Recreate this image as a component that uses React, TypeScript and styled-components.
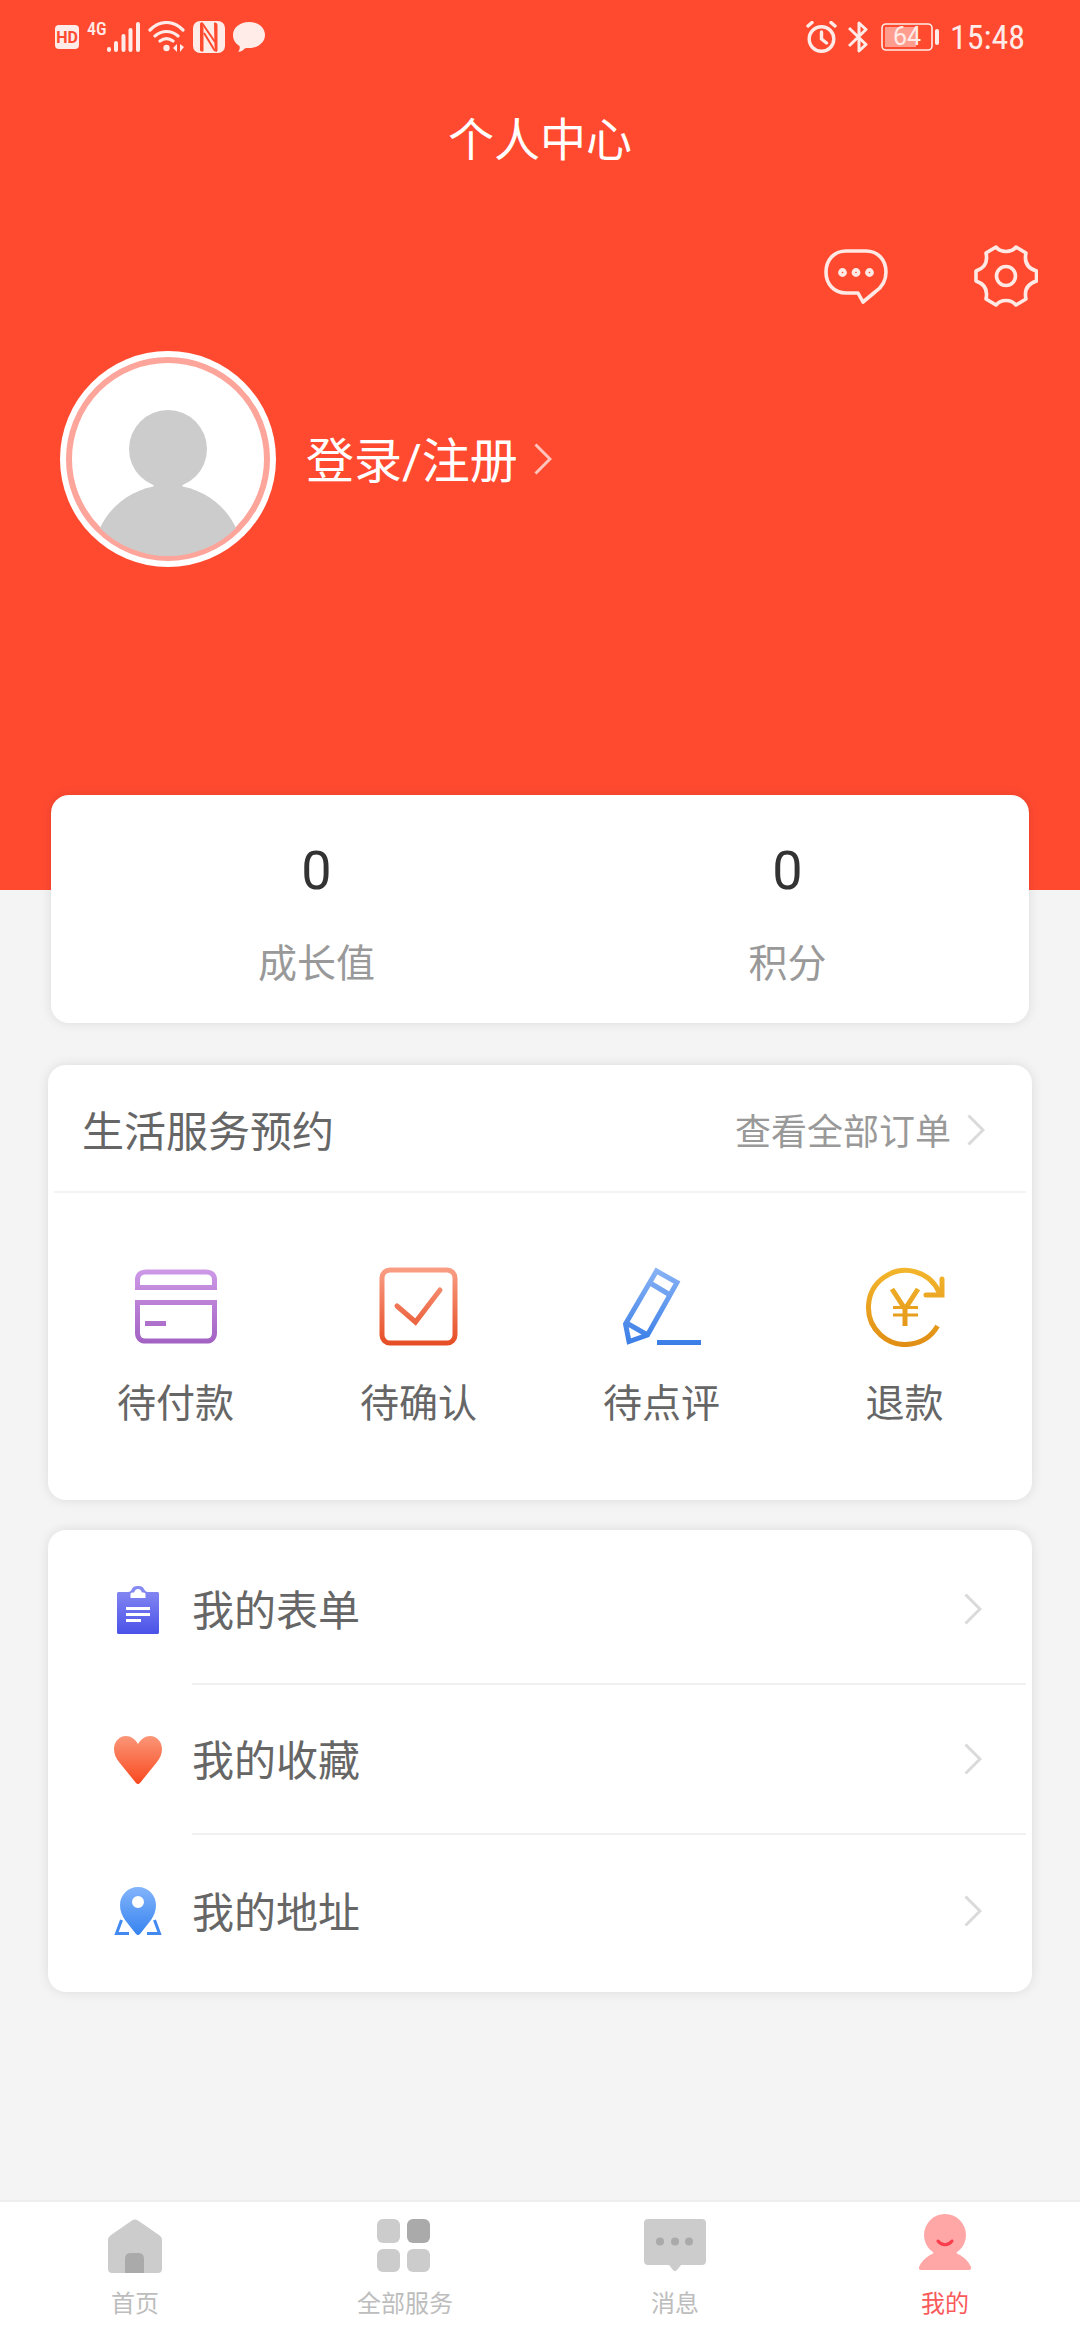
import React from "react";
import styled, { createGlobalStyle } from "styled-components";

const Global = createGlobalStyle`
  * { box-sizing: border-box; }
  body { margin: 0; background: #f4f4f4; }
  body, button {
    font-family: Roboto, "Noto Sans CJK SC", sans-serif;
  }
  button { border: 0; padding: 0; margin: 0; background: none; color: inherit; cursor: pointer; }
  svg { display: block; flex: none; }
  h1, h2, p { margin: 0; font-weight: 400; }
`;

const Page = styled.div`
  min-height: 100vh;
  display: flex;
  flex-direction: column;
  background: #f4f4f4;
`;

const Hero = styled.header`
  height: 890px;
  background: #ff4a30;
  color: #fff;
`;

const StatusBar = styled.div`
  height: 74px;
  padding: 0 55px;
  display: flex;
  align-items: center;
  justify-content: space-between;
  color: #ffebe8;
`;

const StatusGroup = styled.div<{ $gap: number }>`
  display: flex;
  align-items: center;
  gap: ${(p) => p.$gap}px;
`;

const Clock = styled.time`
  font-family: "Roboto Condensed", "Liberation Sans Narrow", Roboto, sans-serif;
  font-size: 34px;
  line-height: 40px;
`;

const Title = styled.h1`
  height: 132px;
  font-size: 46px;
  line-height: 132px;
  text-align: center;
`;

const Actions = styled.div`
  height: 140px;
  padding-right: 42px;
  display: flex;
  justify-content: flex-end;
  align-items: center;
  gap: 86px;
`;

const IconButton = styled.button`
  display: flex;
`;

const Profile = styled.button`
  margin-left: 60px;
  margin-top: 5px;
  display: flex;
  align-items: center;
  font-size: 48px;
  line-height: 64px;
`;

const LoginText = styled.span`
  margin: 0 16px 0 30px;
  padding-top: 6px;
`;

const Main = styled.main`
  flex: 1;
  margin-top: -95px;
  padding: 0 48px 30px;
  display: flex;
  flex-direction: column;
`;

const Card = styled.section`
  background: #fff;
  border-radius: 18px;
  box-shadow: 0 0 12px rgba(0, 0, 0, 0.1);
`;

const StatsCard = styled(Card)`
  height: 228px;
  margin: 0 3px 42px;
  padding: 0 6px 0 30px;
  display: grid;
  grid-template-columns: 1fr 1fr;
`;

const Stat = styled.div`
  padding-top: 44px;
  display: flex;
  flex-direction: column;
  align-items: center;
  gap: 34px;
`;

const StatValue = styled.strong`
  font-size: 54px;
  line-height: 64px;
  font-weight: 400;
  color: #333;
`;

const StatLabel = styled.span`
  font-size: 39px;
  line-height: 54px;
  color: #999;
`;

const OrdersCard = styled(Card)`
  height: 435px;
  margin-bottom: 30px;
  padding: 0 6px;
`;

const OrdersHead = styled.div`
  height: 128px;
  padding: 4px 41px 0 28px;
  display: flex;
  align-items: center;
  justify-content: space-between;
  border-bottom: 2px solid #f3f3f3;
`;

const OrdersTitle = styled.h2`
  padding-top: 6px;
  font-size: 42px;
  line-height: 60px;
  color: #666;
`;

const AllOrders = styled.button`
  display: flex;
  align-items: center;
  gap: 16px;
  font-size: 36px;
  line-height: 54px;
  color: #999;
`;

const AllOrdersText = styled.span`
  padding-top: 6px;
`;

const OrderGrid = styled.div`
  display: grid;
  grid-template-columns: repeat(4, 1fr);
`;

const OrderItem = styled.button`
  padding-top: 74px;
  display: flex;
  flex-direction: column;
  align-items: center;
  gap: 30px;
  font-size: 39px;
  line-height: 54px;
  color: #666;
`;

const MenuCard = styled(Card)`
  padding: 5px 6px;
`;

const MenuRow = styled.button`
  width: 100%;
  height: 150px;
  padding-left: 60px;
  display: flex;
  align-items: center;
  gap: 30px;
  &:last-child { height: 152px; }
`;

const MenuBody = styled.span`
  flex: 1;
  height: 100%;
  padding-right: 44px;
  display: flex;
  align-items: center;
  justify-content: space-between;
  border-bottom: 2px solid #f0f0f0;
  font-size: 42px;
  line-height: 60px;
  color: #666;
  ${MenuRow}:last-child & { border-bottom: 0; }
`;

const MenuText = styled.span`
  padding-top: 6px;
`;

const TabBar = styled.nav`
  height: 140px;
  border-top: 2px solid #eee;
  background: #fff;
  display: grid;
  grid-template-columns: repeat(4, 1fr);
`;

const Tab = styled.button<{ $active?: boolean }>`
  padding-top: 10px;
  display: flex;
  flex-direction: column;
  align-items: center;
  justify-content: flex-start;
  gap: 10px;
  font-size: 24px;
  line-height: 36px;
  color: ${(p) => (p.$active ? "#f95a5a" : "#bdbdbd")};
`;

const HdBadge = styled.span`
  width: 24px;
  height: 24px;
  border-radius: 4px;
  background: #ffebe8;
  color: #ff4a30;
  font-size: 16px;
  font-weight: 700;
  line-height: 25px;
  text-align: center;
`;

const Network = styled.span`
  display: flex;
  align-items: flex-start;
  height: 32px;
  font-family: "Roboto Condensed", "Liberation Sans Narrow", Roboto, sans-serif;
  font-size: 18px;
  font-weight: 500;
  line-height: 16px;
`;

const Chevron = ({ color }: { color: string }) => (
  <svg width="18" height="32" viewBox="0 0 18 32" fill="none" stroke={color} strokeWidth="3">
    <path d="M1.5 1.5 16 16 1.5 30.5" />
  </svg>
);

const Fade = ({ id, from, to, h }: { id: string; from: string; to: string; h: number }) => (
  <defs>
    <linearGradient id={id} gradientUnits="userSpaceOnUse" x1="0" y1="0" x2="0" y2={h}>
      <stop offset="0" stopColor={from} />
      <stop offset="1" stopColor={to} />
    </linearGradient>
  </defs>
);

const SignalIcon = () => (
  <svg width="33" height="32" viewBox="0 0 33 32" fill="none" stroke="currentColor" strokeWidth="4" strokeLinecap="round">
    <path d="M2 28v1M9 22v7M16.500 15v14M23.500 9v20M31 3v26" />
  </svg>
);

const WifiIcon = () => (
  <svg width="37" height="32" viewBox="0 0 37 32" fill="none" stroke="currentColor" strokeWidth="3.2" strokeLinecap="round">
    <path d="M2 9C12-1 25-1 35 9M7 15c7-6 16-6 23 0M12 20c4-3 9-3 13 0" />
    <circle cx="18.500" cy="27" r="3.200" fill="currentColor" stroke="none" />
    <path d="M29 23v8l-4-4zM32 23v8l4-5z" fill="currentColor" stroke="none" />
  </svg>
);

const NfcIcon = () => (
  <svg width="32" height="32" viewBox="0 0 32 32">
    <rect width="32" height="32" rx="7" fill="currentColor" />
    <g fill="#ff4a30">
      <path d="M7 3c0-1 1-2 2-2l1.500 6v23c0 1-3.500 1-3.500-1z" />
      <path d="M21 2c1-1 3.500 0 3.500 2v25c0 1.500-1 2-2 2l-1-6z" />
    </g>
    <path d="M9 2 22 21M11 12l11 18" stroke="#ff4a30" strokeWidth="2" />
  </svg>
);

const BubbleIcon = () => (
  <svg width="32" height="30" viewBox="0 0 32 30" fill="currentColor">
    <path d="M16 0c9 0 16 5.500 16 13s-7 13-16 13c-1.500 0-3 0-4 .3C10 29 7 30 5 29.800c1.500-1.500 2-3.500 1.500-5.800C2.500 21.500 0 18 0 13 0 5.500 7 0 16 0z" />
  </svg>
);

const AlarmIcon = () => (
  <svg width="31" height="32" viewBox="0 0 31 32" fill="none" stroke="currentColor" strokeWidth="3.4" strokeLinecap="round">
    <circle cx="15.500" cy="18" r="12.300" />
    <path d="M15.500 11v7l5 4M2 5l4-3.500M29 5l-4-3.500" />
  </svg>
);

const BluetoothIcon = () => (
  <svg width="22" height="32" viewBox="0 0 22 32" fill="none" stroke="currentColor" strokeWidth="3" strokeLinejoin="round">
    <path d="M1 7 18 23.500 11 30V2l7 6.500L1 25" />
  </svg>
);

const BatteryIcon = () => (
  <svg width="58" height="28" viewBox="0 0 58 28">
    <rect x="1" y="1" width="50" height="26" rx="4" fill="none" stroke="currentColor" strokeWidth="1.600" />
    <rect x="4" y="4" width="31" height="20" fill="#ff9d8e" />
    <rect x="54" y="6" width="4" height="16" rx="2" fill="currentColor" />
    <text x="26" y="22" fontSize="25" fontFamily="Roboto" textAnchor="middle" fill="currentColor">64</text>
  </svg>
);

const MessageIcon = () => (
  <svg width="64" height="60" viewBox="0 0 64 60" fill="none" stroke="#ffe9e5" strokeWidth="3.600" strokeLinejoin="round">
    <path d="M22 5h20c12 0 20 9 20 21 0 9-5 16-11 20L39 56l-5-9H22C10 47 2 38 2 26S10 5 22 5z" />
    <circle cx="18.500" cy="26.500" r="2.600" /><circle cx="32" cy="26.500" r="2.600" /><circle cx="45.500" cy="26.500" r="2.600" />
  </svg>
);

const GearIcon = () => (
  <svg width="64" height="62" viewBox="1 0 64 62" fill="none" stroke="#ffe9e5" strokeWidth="3.600" strokeLinejoin="round">
    <path d="M23 2c5 6 15 6 20 0l10 6c-2 9 1 15 10.500 18v10c-9.500 3-12.500 9-10.500 18l-10 6c-5-6-15-6-20 0l-10-6c2-9-1-15-10-18V26c9-3 12-9 10-18z" />
    <circle cx="33" cy="31" r="9.500" />
  </svg>
);

const Avatar = () => (
  <svg width="216" height="216" viewBox="0 0 216 216">
    <defs><clipPath id="face"><circle cx="108" cy="108" r="97" /></clipPath></defs>
    <circle cx="108" cy="108" r="108" fill="#fff" />
    <circle cx="108" cy="108" r="99" fill="#fff" stroke="#fda59a" strokeWidth="6" />
    <g clipPath="url(#face)" fill="#ccc">
      <circle cx="108" cy="98" r="39" />
      <path d="M92 131q4 2 0 6h32q-4-4 0-6z" />
      <ellipse cx="108" cy="208" rx="75" ry="74" />
    </g>
  </svg>
);

const PayIcon = () => (
  <svg width="82" height="80" viewBox="0 0 82 80" fill="none" stroke="url(#pay)" strokeWidth="5">
    <Fade id="pay" from="#cf9be8" to="#a05fc0" h={80} />
    <path d="M2.500 20.500V13c0-5 3-8 8-8h61c5 0 8 3 8 8v7.500zM2.500 35.500h77V66c0 5-3 8-8 8h-61c-5 0-8-3-8-8zM10 56.500h21" />
  </svg>
);

const ConfirmIcon = () => (
  <svg width="80" height="80" viewBox="0 0 80 80" fill="none" stroke="url(#confirm)" strokeWidth="5">
    <Fade id="confirm" from="#fa9f86" to="#e54b22" h={80} />
    <rect x="3" y="3" width="73" height="73" rx="8" />
    <path d="M18 39 36.500 55 61 23" strokeLinecap="round" />
  </svg>
);

const ReviewIcon = () => (
  <svg width="80" height="80" viewBox="0 0 80 80" fill="none" stroke="url(#review)" strokeWidth="5">
    <Fade id="review" from="#8ab4f5" to="#377ce6" h={80} />
    <path d="M34.500 4 55 15.500 25.500 68 7 74.500 3.500 57zM29 16.500l20 12M4.500 56l21 12" />
    <path d="M35 75.500h44" />
  </svg>
);

const RefundIcon = () => (
  <svg width="80" height="80" viewBox="0 0 80 80" fill="none" stroke="url(#refund)" strokeWidth="5">
    <Fade id="refund" from="#f3b62c" to="#e08e14" h={80} />
    <path d="M72.500 59A37 37 0 1 1 74.500 26" />
    <path d="M77 12v16H61" strokeLinecap="round" />
    <path d="M27 22 40 42 53 22M40 41v18" />
    <path d="M28 40.500h25M28 48h25" strokeWidth="3" />
  </svg>
);

const FormIcon = () => (
  <svg width="48" height="48" viewBox="0 0 48 48">
    <Fade id="form" from="#8a8df3" to="#4a52e8" h={48} />
    <path fill="url(#form)" d="M5 6h9c2 0 3-1 4-3 1-2 2-3 6-3s5 1 6 3c1 2 2 3 4 3h9c1.500 0 2 .5 2 2v38c0 1.500-.5 2-2 2H5c-1.500 0-2-.5-2-2V8c0-1.500.5-2 2-2z" />
    <path fill="#fff" d="M16.500 12V8.500c0-1.500 1-2 2.500-2h1C21 4 22 3 24 3s3 1 4 3.500h1c1.500 0 2.500.5 2.500 2V12z" />
    <path d="M12 22.500h24M12 28.500h24M12 34.500h15" stroke="#fff" strokeWidth="3" />
  </svg>
);

const HeartIcon = () => (
  <svg width="48" height="48" viewBox="0 0 48 48">
    <Fade id="heart" from="#fb9678" to="#f9491f" h={48} />
    <path fill="url(#heart)" d="M24 8C21 3 17 0 12 0 5 0 0 6 0 13c0 5 2 9 5 13l17 21c1.500 1.500 2.500 1.500 4 0l17-21c3-4 5-8 5-13 0-7-5-13-12-13-5 0-9 3-12 8z" />
  </svg>
);

const PinIcon = () => (
  <svg width="48" height="48" viewBox="0 0 48 48">
    <Fade id="pin" from="#83b4fb" to="#3684f0" h={48} />
    <path fill="url(#pin)" fillRule="evenodd" d="M24 0c10 0 18 8 18 18 0 6-2 10-5 15L26 47c-1.500 1.500-2.500 1.500-4 0L11 33C8 28 6 24 6 18 6 8 14 0 24 0zm0 9a6 6 0 1 0 0 12 6 6 0 0 0 0-12z" />
    <path fill="none" stroke="#4289f0" strokeWidth="3" d="M7.500 33 2.500 46.500H15M40.500 33l5 13.500H33" />
  </svg>
);

const HomeIcon = () => (
  <svg width="62" height="64" viewBox="0 0 62 64">
    <path fill="#ccc" d="M28 8.500c2-1.500 4-1.500 6 0l21 14.500c2 1.500 3 3 3 5v29c0 2.500-1.500 4-4 4H8c-2.500 0-4-1.500-4-4V28c0-2 1-3.500 3-5z" />
    <path fill="#aaa" d="M21 61V47c0-4 2-6 6-6h7c4 0 6 2 6 6v14z" />
  </svg>
);

const GridIcon = () => (
  <svg width="62" height="64" viewBox="0 0 62 64" fill="#ccc">
    <rect x="3" y="7" width="23" height="24" rx="6" />
    <rect x="33" y="7" width="23" height="24" rx="6" fill="#aaa" />
    <rect x="3" y="37" width="23" height="23" rx="6" />
    <rect x="33" y="37" width="23" height="23" rx="6" />
  </svg>
);

const ChatIcon = () => (
  <svg width="62" height="64" viewBox="0 0 62 64">
    <path fill="#ccc" d="M4 7h54c2.500 0 4 1.500 4 4v38c0 2.500-1.500 4-4 4H37l-4 5c-1.500 1.500-2.500 1.500-4 0l-4-5H4c-2.500 0-4-1.500-4-4V11c0-2.500 1.500-4 4-4z" />
    <g fill="#aaa"><circle cx="16" cy="29.500" r="4" /><circle cx="31" cy="29.500" r="4" /><circle cx="45" cy="29.500" r="4" /></g>
  </svg>
);

const MeIcon = () => (
  <svg width="62" height="64" viewBox="0 0 62 64">
    <g fill="#ffa6a6">
      <circle cx="31" cy="23" r="21" />
      <path d="M20 37h22c0 4 1 5 4 6 5 3 9 7 11 12 .5 1.800-.5 3-2 3H7c-1.500 0-2.500-1.200-2-3 2-5 6-9 11-12 3-1 4-2 4-6z" />
    </g>
    <path d="M24 29c4 5 10 5 14 0" fill="none" stroke="#fc3d4b" strokeWidth="3" strokeLinecap="round" />
  </svg>
);

const orders = [
  { label: "待付款", Icon: PayIcon },
  { label: "待确认", Icon: ConfirmIcon },
  { label: "待点评", Icon: ReviewIcon },
  { label: "退款", Icon: RefundIcon },
];

const menu = [
  { label: "我的表单", Icon: FormIcon },
  { label: "我的收藏", Icon: HeartIcon },
  { label: "我的地址", Icon: PinIcon },
];

const tabs = [
  { label: "首页", Icon: HomeIcon },
  { label: "全部服务", Icon: GridIcon },
  { label: "消息", Icon: ChatIcon },
  { label: "我的", Icon: MeIcon, active: true },
];

export default function App() {
  return (
    <Page>
      <Global />
      <Hero>
        <StatusBar>
          <StatusGroup $gap={8}>
            <HdBadge>HD</HdBadge>
            <Network>4G<SignalIcon /></Network>
            <WifiIcon />
            <NfcIcon />
            <BubbleIcon />
          </StatusGroup>
          <StatusGroup $gap={11}>
            <AlarmIcon />
            <BluetoothIcon />
            <BatteryIcon />
            <Clock>15:48</Clock>
          </StatusGroup>
        </StatusBar>
        <Title>个人中心</Title>
        <Actions>
          <IconButton aria-label="消息"><MessageIcon /></IconButton>
          <IconButton aria-label="设置"><GearIcon /></IconButton>
        </Actions>
        <Profile>
          <Avatar />
          <LoginText>登录/注册</LoginText>
          <Chevron color="#ffc4bb" />
        </Profile>
      </Hero>
      <Main>
        <StatsCard>
          <Stat><StatValue>0</StatValue><StatLabel>成长值</StatLabel></Stat>
          <Stat><StatValue>0</StatValue><StatLabel>积分</StatLabel></Stat>
        </StatsCard>
        <OrdersCard>
          <OrdersHead>
            <OrdersTitle>生活服务预约</OrdersTitle>
            <AllOrders>
              <AllOrdersText>查看全部订单</AllOrdersText>
              <Chevron color="#dadada" />
            </AllOrders>
          </OrdersHead>
          <OrderGrid>
            {orders.map(({ label, Icon }) => (
              <OrderItem key={label}><Icon />{label}</OrderItem>
            ))}
          </OrderGrid>
        </OrdersCard>
        <MenuCard>
          {menu.map(({ label, Icon }) => (
            <MenuRow key={label}>
              <Icon />
              <MenuBody>
                <MenuText>{label}</MenuText>
                <Chevron color="#dadada" />
              </MenuBody>
            </MenuRow>
          ))}
        </MenuCard>
      </Main>
      <TabBar>
        {tabs.map(({ label, Icon, active }) => (
          <Tab key={label} $active={active}><Icon />{label}</Tab>
        ))}
      </TabBar>
    </Page>
  );
}
